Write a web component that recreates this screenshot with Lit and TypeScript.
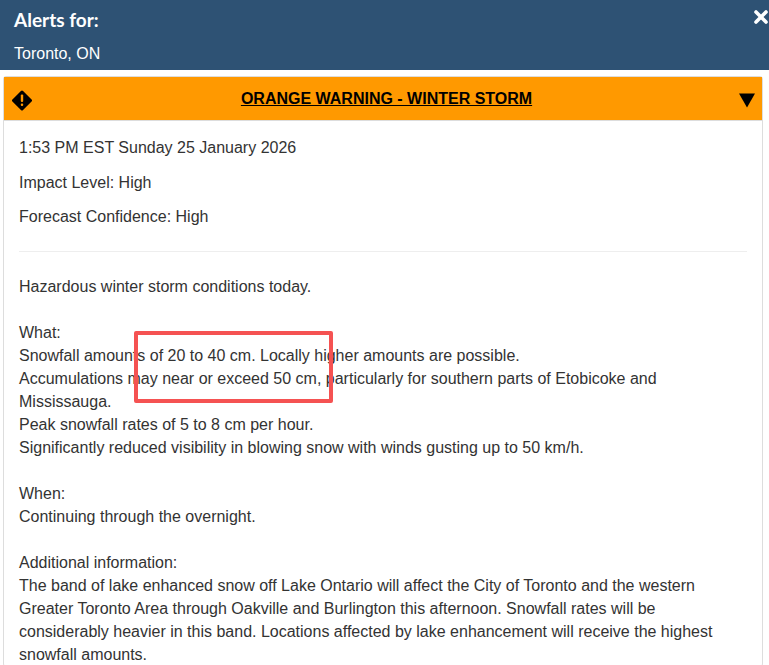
import { LitElement, html, css } from "lit";
import { customElement } from "lit/decorators.js";

@customElement("app-root")
export class AppRoot extends LitElement {
  static styles = css`
    :host { display: block; width: 769px; height: 665px; overflow: hidden; background: #fff; font-family: "Liberation Sans", Arial, sans-serif; color: #333; font-size: 16px; position: relative; }
    .top { background: #2e5274; color: #fff; height: 70px; box-sizing: border-box; padding: 10px 14px 0; position: relative; }
    .top .t { font-family: Lato, "Liberation Sans", sans-serif; font-weight: 700; font-size: 19px; line-height: 20px; }
    .top .c { font-size: 16px; line-height: 20px; margin-top: 14px; }
    .x { position: absolute; right: 1px; top: 10px; width: 14px; height: 14px; }
    .card { margin: 6px 6px 0 3px; border: 1px solid #ddd; border-radius: 3px; }
    .head { background: #f90; height: 43px; display: flex; align-items: center; padding: 0 7px 0 8px; color: #000; }
    .head svg { flex: none; }
    .head .ti { flex: 1; text-align: center; font-weight: 700; text-decoration: underline; font-size: 16px; margin-left: 2px; }
    .body { padding: 15px 15px 0; line-height: 23px; border-top: 1px solid #ddd; }
    p { margin: 0; }
    .m { margin-bottom: 11.5px; }
    hr { border: 0; border-top: 1px solid #eee; margin: 23px 0 23px; }
    .mark { position: absolute; left: 134px; top: 331px; width: 199px; height: 72px; box-sizing: border-box; border: 4px solid #f55252; border-radius: 2px; }
  `;
  render() {
    return html`
      <div class="top">
        <div class="t">Alerts for:</div>
        <div class="c">Toronto, ON</div>
        <svg class="x" viewBox="0 0 14 14"><path d="M2 2 L12 12 M12 2 L2 12" stroke="#fff" stroke-width="3.6" stroke-linecap="round"/></svg>
      </div>
      <div class="card">
        <div class="head">
          <svg width="20" height="26" viewBox="0 0 20 26"><path d="M10 6 L18.5 14.5 L10 23 L1.5 14.5 Z" fill="#000" stroke="#000" stroke-width="3" stroke-linejoin="round"/><rect x="8.8" y="8.5" width="2.4" height="7.5" rx="1" fill="#f90"/><rect x="8.8" y="17.5" width="2.4" height="2.4" rx="1" fill="#f90"/></svg>
          <div class="ti">ORANGE WARNING - WINTER STORM</div>
          <svg width="16" height="22" viewBox="0 0 16 22"><path d="M0 5.5 H16 L8 19.5 Z" fill="#000"/></svg>
        </div>
        <div class="body">
          <p class="m">1:53 PM EST Sunday 25 January 2026</p>
          <p class="m">Impact Level: High</p>
          <p class="m">Forecast Confidence: High</p>
          <hr />
          <p>Hazardous winter storm conditions today.<br /><br />What:<br />Snowfall amounts of 20 to 40 cm. Locally higher amounts are possible.<br />Accumulations may near or exceed 50 cm, particularly for southern parts of Etobicoke and Mississauga.<br />Peak snowfall rates of 5 to 8 cm per hour.<br />Significantly reduced visibility in blowing snow with winds gusting up to 50 km/h.<br /><br />When:<br />Continuing through the overnight.<br /><br />Additional information:<br />The band of lake enhanced snow off Lake Ontario will affect the City of Toronto and the western Greater Toronto Area through Oakville and Burlington this afternoon. Snowfall rates will be considerably heavier in this band. Locations affected by lake enhancement will receive the highest snowfall amounts.</p>
        </div>
      </div>
      <div class="mark"></div>
    `;
  }
}
